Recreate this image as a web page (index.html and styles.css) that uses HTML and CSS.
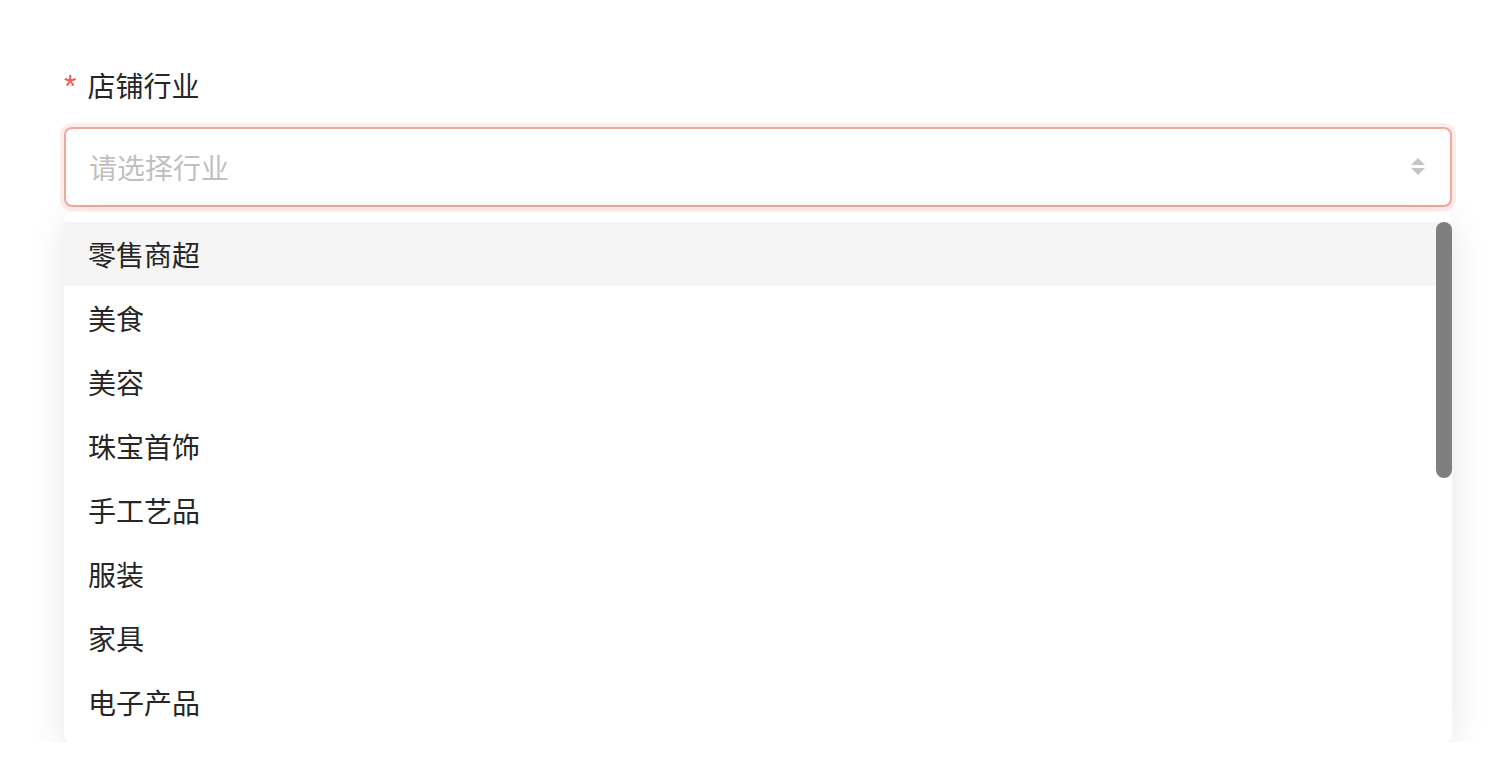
FILE: index.html
```html
<!DOCTYPE html>
<html lang="zh-CN">
<head>
    <meta charset="UTF-8">
    <title>店铺行业</title>
    <meta name="viewport" content="width=device-width, initial-scale=1.0">
    <link rel="stylesheet" href="styles.css">
</head>
<body>

    <div class="form">
        <label class="field-label"><span class="required">*</span>店铺行业</label>

        <div class="select">
            <span class="placeholder">请选择行业</span>
            <svg class="arrows" width="16" height="20" viewBox="0 0 16 20">
                <path d="M8 1 L15 8 L1 8 Z" fill="#c4c4c4"/>
                <path d="M1 11 L15 11 L8 18 Z" fill="#c4c4c4"/>
            </svg>
        </div>

        <div class="dropdown">
            <ul class="options">
                <li class="active">零售商超</li>
                <li>美食</li>
                <li>美容</li>
                <li>珠宝首饰</li>
                <li>手工艺品</li>
                <li>服装</li>
                <li>家具</li>
                <li>电子产品</li>
            </ul>
            <div class="scroll-thumb"></div>
        </div>
    </div>

</body>
</html>
```

FILE: styles.css
```css
body {
    margin: 0;
    background: #fff;
    font-family: "Noto Sans CJK SC", "Noto Sans", sans-serif;
    color: #262626;
}
.form {
    padding: 65px 48px 0 64px;
}
.field-label {
    display: flex;
    align-items: center;
    font-size: 28px;
    line-height: 40px;
    color: #262626;
}
.required {
    color: #ef5b4c;
    margin-right: 11px;
    font-family: "Liberation Sans", sans-serif;
    font-size: 32px;
    position: relative;
    top: 1px;
}
.select {
    margin-top: 22px;
    height: 80px;
    box-sizing: border-box;
    border: 2px solid #f0a89d;
    border-radius: 8px;
    box-shadow: 0 0 0 4px rgba(240, 130, 115, 0.15);
    display: flex;
    align-items: center;
    justify-content: space-between;
    padding: 0 24px 0 23px;
    background: #fff;
}
.placeholder {
    font-size: 28px;
    color: #bfbfbf;
}
.arrows {
    display: block;
}
.dropdown {
    position: relative;
    margin-top: 6px;
    background: #fff;
    border-radius: 8px;
    padding: 9px 0 8px;
    box-shadow: 0 8px 36px rgba(0, 0, 0, 0.1);
}
.options {
    list-style: none;
    margin: 0;
    padding: 0;
}
.options li {
    height: 64px;
    line-height: 64px;
    padding: 0 24px;
    font-size: 28px;
    color: #262626;
}
.options li.active {
    background: #f5f5f5;
}
.scroll-thumb {
    position: absolute;
    top: 9px;
    right: 0;
    width: 16px;
    height: 256px;
    border-radius: 8px;
    background: #7f7f7f;
}
```
